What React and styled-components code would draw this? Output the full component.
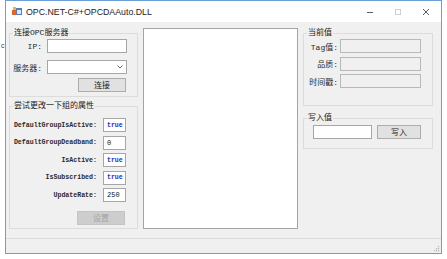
import { Fragment } from "react";
import styled, { createGlobalStyle } from "styled-components";

const GlobalStyle = createGlobalStyle`
  html, body {
    margin: 0;
    padding: 0;
    background: #fff;
  }
  body {
    font-family: "Liberation Sans", "Noto Sans CJK SC", sans-serif;
  }
`;

const Page = styled.div`
  display: flex;
  width: 447px;
  height: 259px;
  overflow: hidden;
`;

const Gutter = styled.div`
  width: 5px;
  flex: none;
  box-sizing: border-box;
  padding: 42px 0 0 1px;
  font: 7px "Liberation Sans", sans-serif;
  color: #444;
  overflow: hidden;
`;

const Window = styled.div`
  width: 437px;
  height: 254px;
  box-sizing: border-box;
  border: 1px solid #6a9fd8;
  display: flex;
  flex-direction: column;
  background: #f0f0f0;
`;

const TitleBar = styled.div`
  height: 21px;
  flex: none;
  background: #fff;
  display: flex;
  align-items: center;
  padding-left: 6px;
`;

const Title = styled.span`
  margin-left: 4px;
  font: 8.8px "Liberation Sans", sans-serif;
  color: #222;
`;

const Controls = styled.div`
  margin-left: auto;
  display: flex;
  height: 100%;
  padding-right: 1px;
`;

const Control = styled.div`
  width: 28px;
  display: flex;
  align-items: center;
  justify-content: center;
  color: ${(p) => (p.$disabled ? "#c6c6c6" : "#333")};
`;

const Body = styled.div`
  flex: 1;
  display: flex;
  gap: 5px;
  padding: 6px 0 0 3px;
`;

const Column = styled.div`
  width: ${(p) => p.$w}px;
  flex: none;
  display: flex;
  flex-direction: column;
  gap: ${(p) => p.$gap}px;
`;

const Group = styled.fieldset`
  margin: 0;
  padding: ${(p) => p.$pad};
  border: 1px solid #dcdcdc;
  height: ${(p) => p.$h}px;
  box-sizing: border-box;
  min-width: 0;
`;

const Legend = styled.legend`
  padding: 0 1px;
  margin-left: 3px;
  font: 8px/10px "Liberation Mono", "Noto Sans CJK SC", monospace;
  color: #1a1a1a;
`;

const Form = styled.div`
  display: grid;
  grid-template-columns: ${(p) => p.$cols};
  column-gap: ${(p) => p.$colGap}px;
  row-gap: ${(p) => p.$rowGap}px;
  align-items: center;
`;

const Label = styled.span`
  text-align: right;
  font: ${(p) => (p.$mono ? "6.6px" : "8px")} "Liberation Mono", "Noto Sans CJK SC", monospace;
  font-weight: ${(p) => (p.$mono ? 600 : 400)};
  color: #2a2a2a;
  white-space: nowrap;
`;

const TextBox = styled.div`
  width: ${(p) => p.$w}px;
  height: 14px;
  box-sizing: border-box;
  border: 1px solid ${(p) => (p.$readOnly ? "#b9b9b9" : "#a6a6a6")};
  background: ${(p) => (p.$readOnly ? "#f0f0f0" : "#fff")};
  display: flex;
  align-items: center;
  justify-content: space-between;
  padding: 0 3px;
  font: ${(p) => (p.$bool ? "600 6.5px" : "7px")} "Liberation Mono", monospace;
  color: ${(p) => (p.$bool ? "#2a2ad0" : "#111")};
`;

const Button = styled.button`
  width: ${(p) => p.$w}px;
  height: 14px;
  padding: 0;
  box-sizing: border-box;
  border: 1px solid ${(p) => (p.disabled ? "#c4c4c4" : "#adadad")};
  background: ${(p) => (p.disabled ? "#cdcdcd" : "#e1e1e1")};
  color: ${(p) => (p.disabled ? "#a3a3a3" : "#222")};
  font: 8px/12px "Noto Sans CJK SC", sans-serif;
  justify-self: end;
  margin-right: ${(p) => p.$mr || 0}px;
  margin-top: ${(p) => p.$mt || 0}px;
  grid-column: 1 / -1;
`;

const ListBox = styled.div`
  width: 155px;
  height: 201px;
  flex: none;
  box-sizing: border-box;
  border: 1px solid #a4a4a4;
  background: #fff;
`;

const WriteRow = styled.div`
  display: flex;
  align-items: center;
  gap: 5px;
  padding: 2px 0 0 9px;
`;

const StatusStrip = styled.div`
  height: 15px;
  flex: none;
  box-sizing: border-box;
  border-top: 1px solid #dcdcdc;
  display: flex;
  justify-content: flex-end;
  align-items: flex-end;
  padding: 0 1px 1px 0;
`;

function AppIcon() {
  return (
    <svg width="10" height="9" viewBox="0 0 10 9">
      <rect x="0" y="3" width="4" height="5" fill="#e2662a" />
      <rect x="1" y="0" width="3" height="3" fill="#f2b234" />
      <rect x="4" y="1" width="6" height="7" fill="#4a7fc4" />
      <rect x="5" y="3" width="4" height="4" fill="#dfe9f5" />
    </svg>
  );
}

function Chevron() {
  return (
    <svg width="6" height="4" viewBox="0 0 6 4">
      <path d="M0.5 0.5 L3 3 L5.5 0.5" fill="none" stroke="#555" strokeWidth="0.9" />
    </svg>
  );
}

function Grip() {
  const dots = [
    [4, 0],
    [2, 2],
    [4, 2],
    [0, 4],
    [2, 4],
    [4, 4],
  ];
  return (
    <svg width="6" height="6" viewBox="0 0 6 6">
      {dots.map(([x, y]) => (
        <rect key={`${x}-${y}`} x={x} y={y} width="1.2" height="1.2" fill="#b5b5b5" />
      ))}
    </svg>
  );
}

const groupProps = [
  { name: "DefaultGroupIsActive:", value: "true", bool: true },
  { name: "DefaultGroupDeadband:", value: "0" },
  { name: "IsActive:", value: "true", bool: true },
  { name: "IsSubscribed:", value: "true", bool: true },
  { name: "UpdateRate:", value: "250" },
];

export default function App() {
  return (
    <Page>
      <GlobalStyle />
      <Gutter>c</Gutter>
      <Window>
        <TitleBar>
          <AppIcon />
          <Title>OPC.NET-C#+OPCDAAuto.DLL</Title>
          <Controls>
            <Control>
              <svg width="6" height="6" viewBox="0 0 6 6">
                <line x1="0" y1="3.5" x2="6" y2="3.5" stroke="currentColor" strokeWidth="0.8" />
              </svg>
            </Control>
            <Control $disabled>
              <svg width="6" height="6" viewBox="0 0 6 6">
                <rect x="0.4" y="0.4" width="5.2" height="5.2" fill="none" stroke="currentColor" strokeWidth="0.8" />
              </svg>
            </Control>
            <Control>
              <svg width="6" height="6" viewBox="0 0 6 6">
                <path d="M0 0 L6 6 M6 0 L0 6" stroke="currentColor" strokeWidth="0.8" />
              </svg>
            </Control>
          </Controls>
        </TitleBar>

        <Body>
          <Column $w={129} $gap={4}>
            <Group $h={69} $pad="1px 0 0 0">
              <Legend>连接OPC服务器</Legend>
              <Form $cols="32px 80px" $colGap={5} $rowGap={7}>
                <Label>IP:</Label>
                <TextBox $w={80} />
                <Label>服务器:</Label>
                <TextBox $w={80}>
                  <span />
                  <Chevron />
                </TextBox>
                <Button $w={48} $mr={1} $mt={-3}>
                  连接
                </Button>
              </Form>
            </Group>
            <Group $h={128} $pad="7px 0 0 0">
              <Legend>尝试更改一下组的属性</Legend>
              <Form $cols="87px 23px" $colGap={6} $rowGap={3.5}>
                {groupProps.map((p) => (
                  <Fragment key={p.name}>
                    <Label $mono>{p.name}</Label>
                    <TextBox $w={23} $bool={p.bool}>
                      {p.value}
                    </TextBox>
                  </Fragment>
                ))}
                <Button $w={48} $mr={1} $mt={5.5} disabled>
                  设置
                </Button>
              </Form>
            </Group>
          </Column>

          <ListBox />

          <Column $w={130} $gap={7}>
            <Group $h={78} $pad="1px 0 0 0">
              <Legend>当前值</Legend>
              <Form $cols="34px 81px" $colGap={2} $rowGap={3.5}>
                <Label>Tag值:</Label>
                <TextBox $w={81} $readOnly />
                <Label>品质:</Label>
                <TextBox $w={81} $readOnly />
                <Label>时间戳:</Label>
                <TextBox $w={81} $readOnly />
              </Form>
            </Group>
            <Group $h={36} $pad="0">
              <Legend>写入值</Legend>
              <WriteRow>
                <TextBox $w={59} />
                <Button $w={44}>写入</Button>
              </WriteRow>
            </Group>
          </Column>
        </Body>

        <StatusStrip>
          <Grip />
        </StatusStrip>
      </Window>
    </Page>
  );
}
